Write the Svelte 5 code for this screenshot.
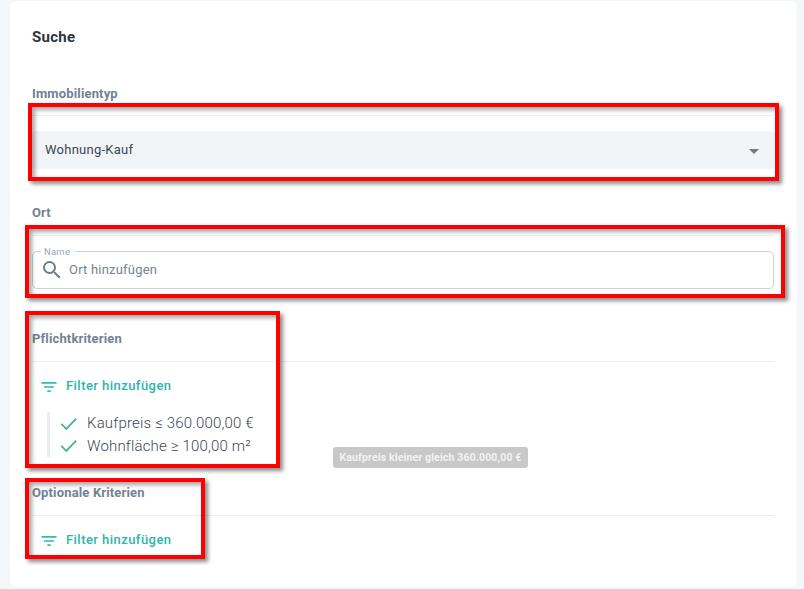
<script>
  const marks = [
    { cls: 'm1' },
    { cls: 'm2' },
    { cls: 'm3' },
    { cls: 'm4' }
  ];
</script>

<div class="page">
  <section class="card">
    <h1>Suche</h1>

    <div class="group first">
      <h2>Immobilientyp</h2>
      <div class="rule"></div>
      <div class="select">
        <span class="value">Wohnung-Kauf</span>
        <span class="caret"></span>
      </div>
    </div>

    <div class="group ort">
      <h2>Ort</h2>
      <div class="rule"></div>
      <div class="field">
        <span class="legend">Name</span>
        <svg class="search" viewBox="0 0 24 24" width="24" height="24"><path fill="#6b7f8e" d="M15.5 14h-.79l-.28-.27A6.47 6.47 0 0 0 16 9.5 6.5 6.5 0 1 0 9.5 16c1.61 0 3.09-.59 4.23-1.57l.27.28v.79l5 4.99L20.49 19l-4.99-5zm-6 0C7.01 14 5 11.99 5 9.5S7.01 5 9.5 5 14 7.01 14 9.5 11.99 14 9.5 14z"/></svg>
        <span class="placeholder">Ort hinzufügen</span>
      </div>
    </div>

    <div class="group pflicht">
      <h2>Pflichtkriterien</h2>
      <div class="rule wide"></div>
      <div class="filter">
        <svg viewBox="0 0 24 24" width="20" height="20"><path fill="#2dbdb0" d="M10 18h4v-2h-4v2zM3 6v2h18V6H3zm3 7h12v-2H6v2z"/></svg>
        <span>Filter hinzufügen</span>
      </div>
      <ul class="checks">
        <li>
          <svg viewBox="0 0 20 16" width="18" height="15"><path fill="none" stroke="#4bb292" stroke-width="2" d="M1.5 8.5l5.5 5.5L18 2.5"/></svg>
          <span>Kaufpreis ≤ 360.000,00 €</span>
        </li>
        <li>
          <svg viewBox="0 0 20 16" width="18" height="15"><path fill="none" stroke="#4bb292" stroke-width="2" d="M1.5 8.5l5.5 5.5L18 2.5"/></svg>
          <span>Wohnfläche ≥ 100,00 m²</span>
        </li>
      </ul>
    </div>

    <div class="group optional">
      <h2>Optionale Kriterien</h2>
      <div class="rule wide"></div>
      <div class="filter">
        <svg viewBox="0 0 24 24" width="20" height="20"><path fill="#2dbdb0" d="M10 18h4v-2h-4v2zM3 6v2h18V6H3zm3 7h12v-2H6v2z"/></svg>
        <span>Filter hinzufügen</span>
      </div>
    </div>
  </section>

  <div class="tip">Kaufpreis kleiner gleich 360.000,00 €</div>
  {#each marks as mark}
    <div class="mark {mark.cls}"></div>
  {/each}
</div>

<style>
  :global(body) {
    margin: 0;
    background: #f3f7fa;
  }
  .page {
    position: relative;
    width: 804px;
    height: 589px;
    overflow: hidden;
    font-family: Roboto, "Liberation Sans", sans-serif;
    padding: 1px 7px 0 10px;
    box-sizing: border-box;
  }
  .card {
    background: #fff;
    border-radius: 6px;
    height: 586px;
    padding: 27px 23px 0 22px;
    box-sizing: border-box;
  }
  h1 {
    margin: 0;
    font-size: 15px;
    line-height: 18px;
    font-weight: 700;
    color: #2b3540;
    letter-spacing: 0.3px;
  }
  h2 {
    margin: 0;
    font-size: 13px;
    line-height: 16px;
    font-weight: 700;
    color: #728294;
    letter-spacing: 0.15px;
  }
  .rule {
    height: 1px;
    background: #e8eef2;
  }
  .group.first { margin-top: 40px; }
  .group.first .rule { margin-top: 13px; }
  .select {
    margin-top: 15px;
    height: 38px;
    background: #f1f5f8;
    border-radius: 4px;
    display: flex;
    align-items: center;
    justify-content: space-between;
    padding: 0 15px 0 13px;
    font-size: 13px;
    color: #3a4654;
    letter-spacing: 0.25px;
  }
  .value { margin-bottom: 2px; }
  .caret {
    width: 0;
    height: 0;
    border-left: 5px solid transparent;
    border-right: 5px solid transparent;
    border-top: 5px solid #75797d;
    margin-top: 2px;
  }
  .group.ort { margin-top: 36px; }
  .group.ort .rule { margin-top: 14px; }
  .field {
    position: relative;
    margin-top: 15px;
    height: 38px;
    box-sizing: border-box;
    border: 1px solid #c8d3dc;
    border-radius: 5px;
    display: flex;
    align-items: center;
    padding-left: 7px;
    gap: 5px;
  }
  .legend {
    position: absolute;
    left: 8px;
    top: -6px;
    padding: 0 5px 0 3px;
    background: #fff;
    font-size: 9.5px;
    line-height: 11px;
    color: #9aa7b2;
    letter-spacing: 0.2px;
  }
  .search { flex: none; margin-top: -1px; }
  .placeholder {
    font-size: 13px;
    color: #74838f;
    letter-spacing: 0.2px;
    margin-bottom: 2px;
  }
  .group.pflicht { margin-top: 42px; }
  .rule.wide { margin-top: 14px; }
  .filter {
    margin-top: 13px;
    margin-left: 7px;
    height: 20px;
    display: flex;
    align-items: center;
    gap: 7px;
    font-size: 13px;
    font-weight: 500;
    color: #2eb5a8;
    letter-spacing: 0.45px;
  }
  .filter svg { margin-top: 3px; }
  .checks {
    list-style: none;
    margin: 17px 0 0 15px;
    padding: 0 0 0 10px;
    border-left: 3px solid #e6eef3;
    height: 45px;
    box-sizing: border-box;
  }
  .checks li {
    display: flex;
    align-items: center;
    height: 22.5px;
    gap: 9px;
    font-size: 15px;
    font-weight: 300;
    color: #3d4855;
    letter-spacing: 0.17px;
  }
  .group.optional { margin-top: 28px; }
  .tip {
    position: absolute;
    left: 333px;
    top: 447px;
    width: 195px;
    height: 21px;
    line-height: 21px;
    text-align: center;
    background: #c8c8c8;
    border-radius: 3px;
    color: #f2f2f2;
    font-size: 10.5px;
    font-weight: 700;
    letter-spacing: 0.15px;
  }
  .mark {
    position: absolute;
    box-sizing: border-box;
    border: 4px solid #f00;
    box-shadow: 3px 3px 4px rgba(0, 0, 0, 0.45), inset 3px 3px 4px rgba(0, 0, 0, 0.35);
  }
  .m1 { left: 28px; top: 103px; width: 751px; height: 78px; }
  .m2 { left: 25px; top: 225px; width: 760px; height: 73px; }
  .m3 { left: 25px; top: 311px; width: 255px; height: 157px; }
  .m4 { left: 25px; top: 478px; width: 180px; height: 81px; }
</style>
